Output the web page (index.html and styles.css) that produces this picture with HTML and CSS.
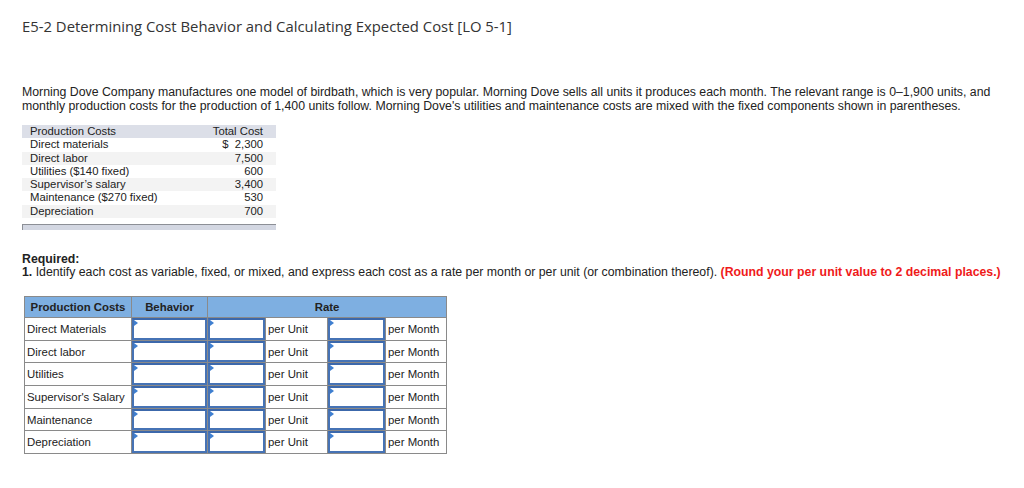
FILE: index.html
```
<!DOCTYPE html>
<html>
<head>
<meta charset="utf-8">
<link rel="stylesheet" href="styles.css">
</head>
<body>
<div class="page">
  <h1 class="title">E5-2 Determining Cost Behavior and Calculating Expected Cost [LO 5-1]</h1>
  <p class="intro">Morning Dove Company manufactures one model of birdbath, which is very popular. Morning Dove sells all units it produces each month. The relevant range is 0–1,900 units, and monthly production costs for the production of 1,400 units follow. Morning Dove's utilities and maintenance costs are mixed with the fixed components shown in parentheses.</p>

  <div class="given">
    <table class="given-table">
      <tr class="ghead"><td class="gl">Production Costs</td><td class="gr">Total Cost</td></tr>
      <tr><td class="gl">Direct materials</td><td class="gr">$&nbsp; 2,300</td></tr>
      <tr class="alt"><td class="gl">Direct labor</td><td class="gr">7,500</td></tr>
      <tr><td class="gl">Utilities ($140 fixed)</td><td class="gr">600</td></tr>
      <tr class="alt"><td class="gl">Supervisor’s salary</td><td class="gr">3,400</td></tr>
      <tr><td class="gl">Maintenance ($270 fixed)</td><td class="gr">530</td></tr>
      <tr class="alt"><td class="gl">Depreciation</td><td class="gr">700</td></tr>
    </table>
    <div class="given-bar"></div>
  </div>

  <div class="required">
    <div class="req-head">Required:</div>
    <div class="req-line"><b>1.</b> Identify each cost as variable, fixed, or mixed, and express each cost as a rate per month or per unit (or combination thereof). <span class="red">(Round your per unit value to 2 decimal places.)</span></div>
  </div>

  <table class="answer">
    <colgroup>
      <col class="w1"><col class="w2"><col class="w3"><col class="w4"><col class="w5"><col class="w6">
    </colgroup>
    <tr class="ahead">
      <th>Production Costs</th>
      <th>Behavior</th>
      <th colspan="4">Rate</th>
    </tr>
    <tr>
      <td>Direct Materials</td>
      <td class="inp"><div class="box"></div></td>
      <td class="inp"><div class="box"></div></td>
      <td>per Unit</td>
      <td class="inp"><div class="box"></div></td>
      <td>per Month</td>
    </tr>
    <tr>
      <td>Direct labor</td>
      <td class="inp"><div class="box"></div></td>
      <td class="inp"><div class="box"></div></td>
      <td>per Unit</td>
      <td class="inp"><div class="box"></div></td>
      <td>per Month</td>
    </tr>
    <tr>
      <td>Utilities</td>
      <td class="inp"><div class="box"></div></td>
      <td class="inp"><div class="box"></div></td>
      <td>per Unit</td>
      <td class="inp"><div class="box"></div></td>
      <td>per Month</td>
    </tr>
    <tr>
      <td>Supervisor's Salary</td>
      <td class="inp"><div class="box"></div></td>
      <td class="inp"><div class="box"></div></td>
      <td>per Unit</td>
      <td class="inp"><div class="box"></div></td>
      <td>per Month</td>
    </tr>
    <tr>
      <td>Maintenance</td>
      <td class="inp"><div class="box"></div></td>
      <td class="inp"><div class="box"></div></td>
      <td>per Unit</td>
      <td class="inp"><div class="box"></div></td>
      <td>per Month</td>
    </tr>
    <tr>
      <td>Depreciation</td>
      <td class="inp"><div class="box"></div></td>
      <td class="inp"><div class="box"></div></td>
      <td>per Unit</td>
      <td class="inp"><div class="box"></div></td>
      <td>per Month</td>
    </tr>
  </table>
</div>
</body>
</html>
```
FILE: styles.css
```
html, body {
  margin: 0;
  padding: 0;
  background: #fff;
}
.page {
  padding: 0 22px;
  color: #222;
  font-family: "Liberation Sans", Arial, sans-serif;
}
.title {
  margin: 0;
  padding-top: 16px;
  font-family: "Open Sans", sans-serif;
  font-weight: 400;
  font-size: 14.85px;
  line-height: 20px;
  color: #333;
}
.intro {
  margin: 0;
  padding-top: 49px;
  font-size: 12.3px;
  line-height: 14px;
  width: 985px;
  color: #222;
}
.given {
  margin-top: 12px;
  width: 254px;
}
.given-table {
  border-collapse: collapse;
  width: 254px;
  font-size: 11.3px;
  line-height: 13.3px;
  color: #222;
}
.given-table td {
  padding: 0;
  height: 13.3px;
}
.gl {
  padding-left: 8px !important;
}
.gr {
  text-align: right;
  padding-right: 13px !important;
}
.ghead td {
  background: #dcdfe8;
}
.alt td {
  background: #f3f3f3;
}
.given-bar {
  margin-top: 6px;
  height: 5px;
  background: #d3d7e2;
  border-top: 1px solid #8c8f96;
  border-left: 1px solid #8c8f96;
}
.required {
  margin-top: 23px;
  font-size: 12.3px;
  line-height: 13px;
}
.req-head {
  font-weight: bold;
}
.red {
  color: #ef1a1a;
  font-weight: bold;
}
.answer {
  margin-top: 17px;
  margin-left: 2px;
  border-collapse: collapse;
  table-layout: fixed;
  width: 423px;
  font-size: 11.4px;
  color: #222;
}
.w1 { width: 107px; }
.w2 { width: 76px; }
.w3 { width: 58px; }
.w4 { width: 62px; }
.w5 { width: 58px; }
.w6 { width: 61px; }
.answer th, .answer td {
  border: 1px solid #8a8a8a;
  padding: 0 2px;
  height: 21.67px;
  text-align: left;
  white-space: nowrap;
  overflow: hidden;
}
.ahead th {
  background: #7eafe1;
  font-weight: bold;
  text-align: center;
  height: 20px;
}
.answer td.inp {
  padding: 0;
}
.box {
  position: relative;
  height: 17.67px;
  border: 2px solid #4673b5;
  border-top-color: #3c68ab;
}
.box::before {
  content: "";
  position: absolute;
  left: 0;
  top: 0;
  width: 0;
  height: 0;
  border-top: 3px solid transparent;
  border-bottom: 3px solid transparent;
  border-left: 4px solid #3f7fd0;
}
```
